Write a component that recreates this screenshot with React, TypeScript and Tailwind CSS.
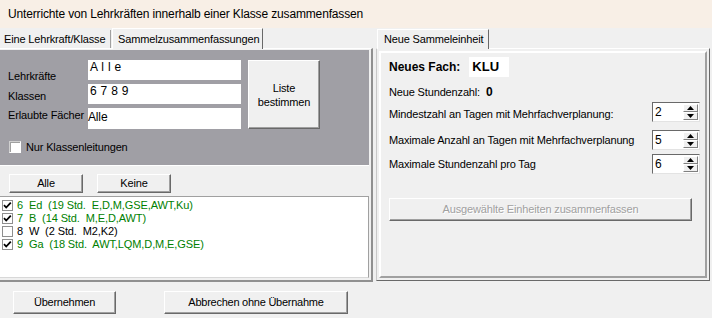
import React from "react";

function Check() {
  return (
    <svg width="9" height="9" viewBox="0 0 9 9">
      <path d="M1 4.2 L3.2 6.5 L7.8 1.6" stroke="black" strokeWidth="1.8" fill="none" />
    </svg>
  );
}

function ListItem({ checked, text, green }: { checked: boolean; text: string; green: boolean }) {
  return (
    <div className="h-[13px] flex items-center pl-[2px]">
      <div className="w-[11px] h-[11px] bg-white border border-[#8f8f8f] flex items-center justify-center shrink-0">
        {checked && <Check />}
      </div>
      <span className={`ml-[4px] whitespace-pre text-[11px] leading-[13px] tracking-[-0.1px] ${green ? "text-[#008000]" : "text-black"}`}>{text}</span>
    </div>
  );
}

function Btn({ children, className }: { children: React.ReactNode; className: string }) {
  return (
    <div
      className={`bg-[#f0f0f0] border border-t-white border-l-white border-r-[#696969] border-b-[#696969] shadow-[inset_-1px_-1px_0_#a0a0a0] flex items-center justify-center text-center ${className}`}
    >
      {children}
    </div>
  );
}

function Spinner({ v }: { v: string }) {
  return (
    <div className="w-[48px] h-[20px] bg-white border border-t-[#696969] border-l-[#696969] border-r-[#e3e3e3] border-b-[#e3e3e3] flex shrink-0">
      <div className="flex-1 pl-[2px] leading-[18px] text-[12px]">{v}</div>
      <div className="w-[15px] flex flex-col my-[1px] mr-[1px]">
        <div className="flex-1 bg-[#f0f0f0] border-t border-l border-white border-b border-r border-b-[#808080] border-r-[#808080] flex items-center justify-center">
          <svg width="7" height="4" viewBox="0 0 7 4">
            <path d="M3.5 0 L7 4 L0 4Z" fill="black" />
          </svg>
        </div>
        <div className="flex-1 bg-[#f0f0f0] border-t border-l border-white border-b border-r border-b-[#808080] border-r-[#808080] flex items-center justify-center">
          <svg width="7" height="4" viewBox="0 0 7 4">
            <path d="M0 0 L7 0 L3.5 4Z" fill="black" />
          </svg>
        </div>
      </div>
    </div>
  );
}

export default function App() {
  return (
    <div className="w-[712px] h-[318px] bg-[#f0f0f0] flex flex-col font-['Liberation_Sans',Arial,sans-serif] text-[11px] tracking-[-0.15px] text-black overflow-hidden">
      <div className="h-[28px] bg-[#f8efe6] flex items-center pl-[8px] text-[12px] tracking-[-0.15px] shrink-0">
        Unterrichte von Lehrkräften innerhalb einer Klasse zusammenfassen
      </div>

      <div className="flex h-[254px] shrink-0">
        {/* left column */}
        <div className="w-[374px] flex flex-col">
          <div className="h-[20px] flex items-end">
            <div className="h-[18px] w-[111px] pl-[4px] flex items-center border-r border-r-[#a0a0a0]">
              Eine Lehrkraft/Klasse
            </div>
            <div className="h-[21px] w-[151px] ml-[1px] pl-[5px] flex items-center bg-[#f0f0f0] border-t border-l border-white border-r border-r-[#696969] -mb-[1px] relative z-10">
              Sammelzusammenfassungen
            </div>
          </div>
          <div className="flex-1 flex flex-col border-t border-t-white w-[373px] border-r-2 border-r-[#909090] border-b-2 border-b-[#909090] pr-[2px] pb-[2px]">
            <div className="pt-[1px]">
              <div className="h-[115px] bg-[#a09fa5] flex flex-col">
                <div className="flex pt-[10px]">
                  <div className="w-[88px] pl-[8px] flex flex-col pt-[9px]">
                    <div className="h-[20px] leading-[14px]">Lehrkräfte</div>
                    <div className="h-[19px] leading-[14px]">Klassen</div>
                    <div className="h-[20px] leading-[14px] whitespace-nowrap">Erlaubte Fächer</div>
                  </div>
                  <div className="w-[153px] flex flex-col gap-[4px]">
                    <div className="h-[20px] bg-white pl-[2px] pt-[1px] text-[12px] leading-[12px] whitespace-pre tracking-[0.3px]">A l l e</div>
                    <div className="h-[20px] bg-white pl-[2px] pt-[1px] text-[12px] leading-[12px] whitespace-pre tracking-[0.3px]">6 7 8 9</div>
                    <div className="h-[21px] bg-white pt-[2px] text-[12px] leading-[14px]">Alle</div>
                  </div>
                  <Btn className="ml-[7px] w-[72px] h-[69px] leading-[14px]">
                    <span>
                      Liste
                      <br />
                      bestimmen
                    </span>
                  </Btn>
                </div>
                <div className="flex items-center pl-[9px] mt-[10px]">
                  <div className="w-[12px] h-[12px] bg-white border border-t-[#d0d0d0] border-l-[#d0d0d0] border-r-white border-b-white shadow-[inset_1px_1px_0_#a0a0a0]" />
                  <span className="ml-[5px]">Nur Klassenleitungen</span>
                </div>
              </div>
            </div>
            <div className="h-[31px] flex pl-[9px] pt-[8px] gap-[14px] border-t border-t-white">
              <Btn className="w-[74px] h-[19px]">Alle</Btn>
              <Btn className="w-[74px] h-[19px]">Keine</Btn>
            </div>
            <div className="flex-1 bg-white border-t border-t-[#a0a0a0] border-r border-r-[#a0a0a0] border-b border-b-[#d8d8d8] pt-[2px] w-[369px]">
              <ListItem checked green text="6  Ed  (19 Std.  E,D,M,GSE,AWT,Ku)" />
              <ListItem checked green text="7  B  (14 Std.  M,E,D,AWT)" />
              <ListItem checked={false} green={false} text="8  W  (2 Std.  M2,K2)" />
              <ListItem checked green text="9  Ga  (18 Std.  AWT,LQM,D,M,E,GSE)" />
            </div>
          </div>
        </div>

        {/* right column */}
        <div className="w-[336px] ml-[2px] flex flex-col">
          <div className="h-[20px] flex items-end">
            <div className="h-[20px] w-[112px] ml-[1px] pl-[6px] flex items-center bg-[#f0f0f0] border-t border-l border-white border-r border-r-[#696969] -mb-[1px] relative z-10">
              Neue Sammeleinheit
            </div>
          </div>
          <div className="h-[233px] w-[334px] border border-t-white border-l-[#c8c8c8] border-r-[#696969] border-b-[#696969] p-[2px] flex">
            <div className="flex-1 border-2 border-t-white border-l-white border-r-[#a0a0a0] border-b-[#a0a0a0] pl-[8px] pr-[5px] flex flex-col">
              <div className="flex items-center mt-[4px] h-[20px]">
                <span className="text-[12px] font-bold tracking-normal">Neues Fach:</span>
                <div className="ml-[9px] w-[40px] h-[20px] bg-white pl-[3px] flex items-center text-[13px] font-bold tracking-normal">KLU</div>
              </div>
              <div className="mt-[8px] h-[14px] leading-[14px]">
                Neue Stundenzahl: <span className="font-bold text-[12px] ml-[3px]">0</span>
              </div>
              <div className="mt-[2px] h-[21px] flex items-center justify-between">
                <span className="pt-[6px]">Mindestzahl an Tagen mit Mehrfachverplanung:</span>
                <Spinner v="2" />
              </div>
              <div className="mt-[8px] h-[20px] flex items-center justify-between">
                <span>Maximale Anzahl an Tagen mit Mehrfachverplanung</span>
                <Spinner v="5" />
              </div>
              <div className="mt-[4px] h-[20px] flex items-center justify-between">
                <span>Maximale Stundenzahl pro Tag</span>
                <Spinner v="6" />
              </div>
              <Btn className="mt-[24px] w-[303px] h-[23px] text-[#a0a0a0] [text-shadow:1px_1px_0_#fff]">
                Ausgewählte Einheiten zusammenfassen
              </Btn>
            </div>
          </div>
        </div>
      </div>

      <div className="flex-1 flex pl-[13px] pt-[9px] gap-[48px]">
        <Btn className="w-[103px] h-[23px] tracking-[-0.25px]">Übernehmen</Btn>
        <Btn className="w-[184px] h-[23px] tracking-[-0.25px]">Abbrechen ohne Übernahme</Btn>
      </div>
    </div>
  );
}
